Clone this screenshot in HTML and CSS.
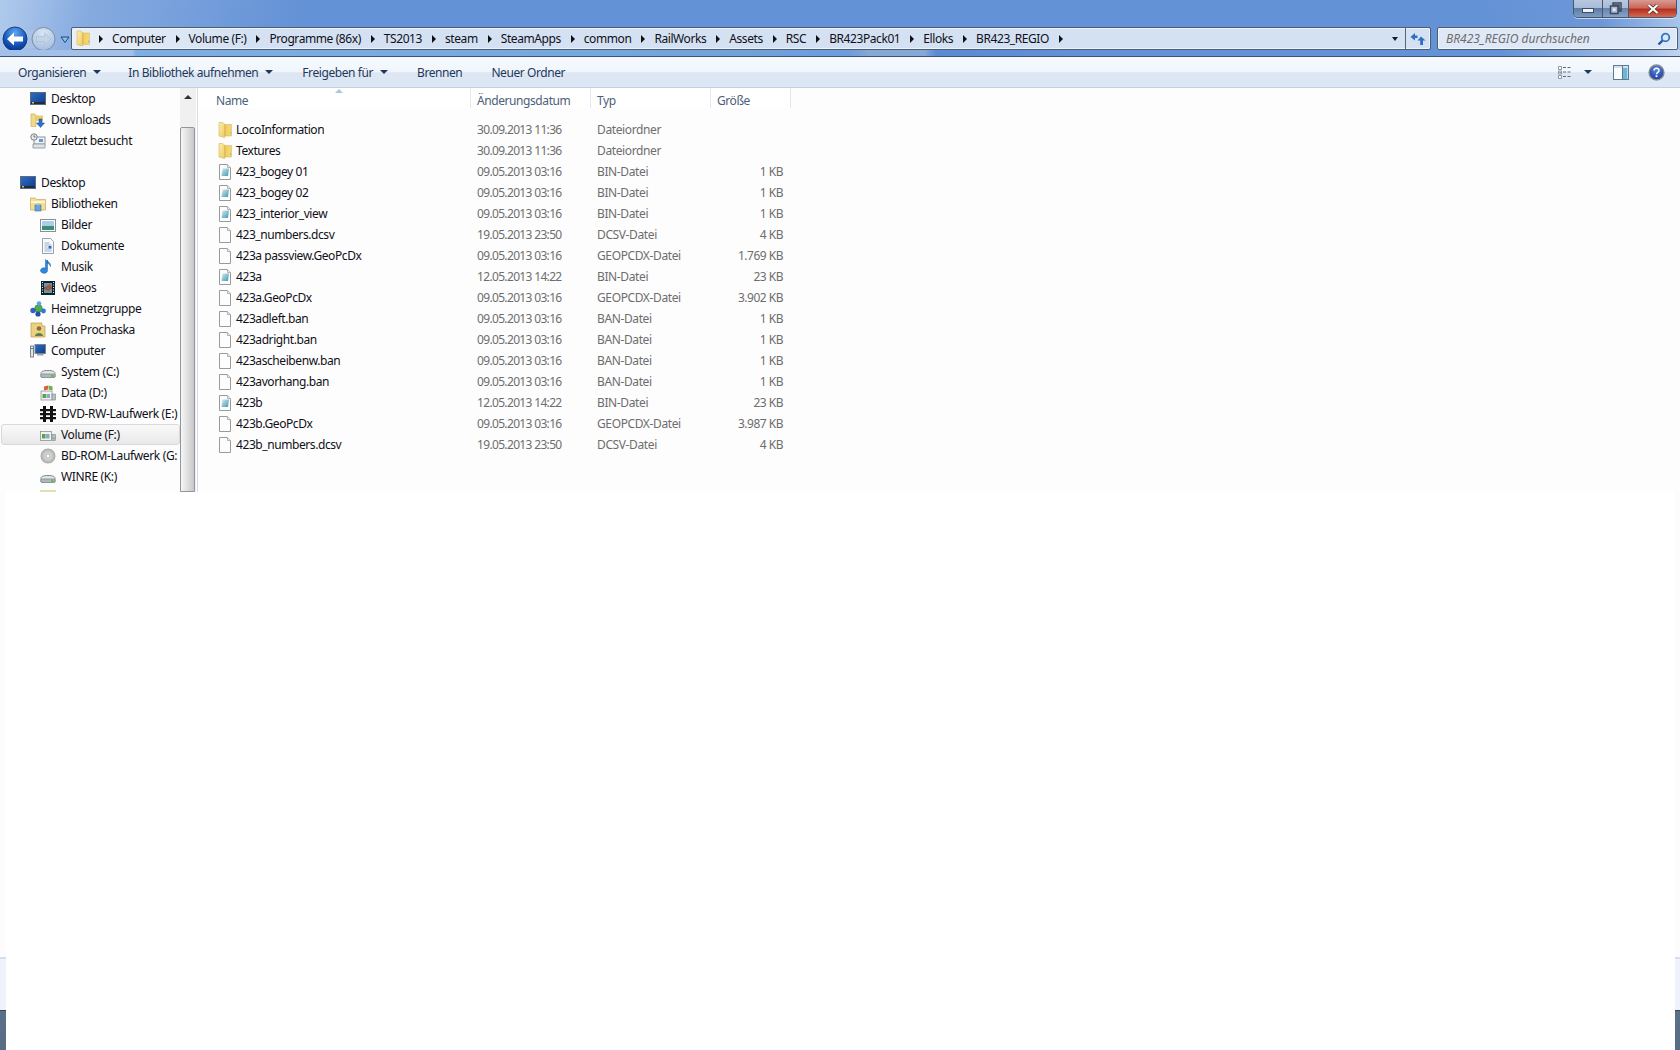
FILE: index.html
```html
<!DOCTYPE html>
<html lang="de">
<head>
<meta charset="utf-8">
<title>BR423_REGIO</title>
<link rel="stylesheet" href="styles.css">
</head>
<body>
<svg class="defs" width="0" height="0" aria-hidden="true">
  <defs>
    <linearGradient id="gLeaf" x1="0" y1="0" x2="1" y2="1"><stop offset="0" stop-color="#fbeeb0"/><stop offset="1" stop-color="#eecb5c"/></linearGradient>
    <linearGradient id="gFolder" x1="0" y1="0" x2="1" y2="0"><stop offset="0" stop-color="#b8913a"/><stop offset=".25" stop-color="#f2cf60"/><stop offset="1" stop-color="#f4d874"/></linearGradient>
    <linearGradient id="gBin" x1="0" y1="0" x2="1" y2="1"><stop offset="0" stop-color="#d6eaee"/><stop offset="1" stop-color="#3f97b2"/></linearGradient>
    <linearGradient id="gDesk" x1="0" y1="0" x2="1" y2="1"><stop offset="0" stop-color="#2f6fc7"/><stop offset="1" stop-color="#0d3a8a"/></linearGradient>
    <radialGradient id="gBack" cx=".5" cy=".25" r=".8"><stop offset="0" stop-color="#5fa8ee"/><stop offset=".55" stop-color="#1a5cc0"/><stop offset="1" stop-color="#062a80"/></radialGradient>
    <radialGradient id="gFwd" cx=".5" cy=".25" r=".8"><stop offset="0" stop-color="#d9e6f6"/><stop offset="1" stop-color="#a3bcdc"/></radialGradient>
    <radialGradient id="gHelp" cx=".5" cy=".3" r=".8"><stop offset="0" stop-color="#5a8ae0"/><stop offset="1" stop-color="#0f2f90"/></radialGradient>
    <radialGradient id="gDisc" cx=".5" cy=".5" r=".6"><stop offset="0" stop-color="#f0f0f0"/><stop offset=".7" stop-color="#b4b8b4"/><stop offset="1" stop-color="#8a908a"/></radialGradient>
    <symbol id="i-folder" viewBox="0 0 16 16"><path d="M7 2.500h7.500v11.500H7z" fill="url(#gFolder)" stroke="#d9bb62" stroke-width=".6"/><path d="M2 .5h3.500l2.200 1.500v13.500l-5.700-1.500z" fill="url(#gLeaf)" stroke="#d6b65c" stroke-width=".6"/><rect x="13" y="10" width="1" height="2" fill="#7cc4e4"/></symbol>
    <symbol id="i-file" viewBox="0 0 16 16"><path d="M2.500.5h8l3 3v12h-11z" fill="#fdfdfd" stroke="#9a9a9a"/><path d="M10.500.5v3h3" fill="#ececec" stroke="#b4b4b4"/></symbol>
    <symbol id="i-bin" viewBox="0 0 16 16"><path d="M2.500.5h8l3 3v12h-11z" fill="#fdfdfd" stroke="#9a9a9a"/><path d="M10.500.5v3h3" fill="#ececec" stroke="#b4b4b4"/><path d="M5.500 4.500h6.500l-1 7.500h-6.500z" fill="url(#gBin)"/></symbol>
    <symbol id="i-desktop" viewBox="0 0 16 16"><rect x=".5" y="1.500" width="15" height="12" fill="url(#gDesk)" stroke="#5a6c82"/><rect x="1" y="11" width="14" height="2" fill="#222c38"/><rect x="2" y="11" width="2" height="1.500" fill="#e6b840"/></symbol>
    <symbol id="i-download" viewBox="0 0 16 16"><path d="M1 2h4l1 1.500v11H1z" fill="#f1d98a" stroke="#c9a64c" stroke-width=".6"/><path d="M6 3.500h7V9H6z" fill="#edcc6c"/><path d="M9 7h3v4h2.500L10.500 15.500 6.500 11H9z" fill="#2a74cf" stroke="#174c98" stroke-width=".5"/></symbol>
    <symbol id="i-recent" viewBox="0 0 16 16"><rect x="4" y="4" width="11" height="7" fill="#f2f4f6" stroke="#8b949c"/><rect x="9" y="6" width="4" height="3" fill="#5c9bdc"/><path d="M3 11h12v4H3z" fill="#dfe2e4" stroke="#9aa2a8"/><circle cx="4" cy="4" r="3.200" fill="#e9eaea" stroke="#787f85"/><path d="M4 2.200V4h1.600" fill="none" stroke="#555" stroke-width=".8"/></symbol>
    <symbol id="i-lib" viewBox="0 0 16 16"><path d="M.5 3.500V2h5l1 1.500h9V14H.5z" fill="#f4dd95" stroke="#c9a64c" stroke-width=".7"/><path d="M1 5h14v2H1z" fill="#fff6d0"/><rect x="5" y="9" width="6" height="6" fill="#6aa3d8" stroke="#3b6ea8" stroke-width=".6"/><rect x="6.500" y="7.500" width="3" height="2" fill="#9cc3e6"/></symbol>
    <symbol id="i-pics" viewBox="0 0 16 16"><rect x=".5" y="2.500" width="15" height="12" fill="#fff" stroke="#8c8f92"/><rect x="2" y="4" width="12" height="5" fill="#a8cfe8"/><rect x="2" y="9" width="12" height="4" fill="#3c8c78"/></symbol>
    <symbol id="i-docs" viewBox="0 0 16 16"><path d="M2.500.5h8l3 3v12h-11z" fill="#f7f9fc" stroke="#9aa3ad"/><path d="M4.500 5h5M4.500 7h7M4.500 9h3M4.500 11h7M4.500 13h7" stroke="#9fb2c8"/><rect x="8.500" y="8" width="3" height="2.500" fill="#2e6bb4"/></symbol>
    <symbol id="i-music" viewBox="0 0 16 16"><path d="M7.500 1v10.500a3.500 2.800 0 1 1-2-2.500V0.500c2 2 5.500 3 5 7-.8-2.200-2-3-3-3.200z" fill="#2f86da" stroke="#1a5ea8" stroke-width=".5"/></symbol>
    <symbol id="i-video" viewBox="0 0 16 16"><rect x="1" y="1" width="14" height="14" fill="#11232c"/><path d="M4 3h8v4.500H4zM4 8.500h8V13H4z" fill="#6d93ae"/><path d="M5 7l5-3 2 3.500-3 3.500-4-1z" fill="#a05a3a"/><path d="M2 2.500h1M2 5h1M2 7.500h1M2 10h1M2 12.500h1M13 2.500h1M13 5h1M13 7.500h1M13 10h1M13 12.500h1" stroke="#dfe8ee" stroke-width="1.200"/></symbol>
    <symbol id="i-home" viewBox="0 0 16 16"><circle cx="8.500" cy="7.500" r="3.800" fill="#4bb04a" stroke="#2a7a35" stroke-width=".6"/><circle cx="3" cy="9.500" r="2.700" fill="#3560c0"/><circle cx="13.500" cy="10" r="2.400" fill="#2f78d4"/><circle cx="9" cy="2.500" r="2.300" fill="#5f9fe6"/><circle cx="8" cy="13" r="2.600" fill="#2450a8"/></symbol>
    <symbol id="i-user" viewBox="0 0 16 16"><path d="M1 1h11v3h3v11H1z" fill="#ecd27f" stroke="#bb9c4d" stroke-width=".7"/><circle cx="9" cy="6.500" r="2.300" fill="#8a6c4a"/><path d="M5 14c0-4 8-4 8 0z" fill="#5d7f4e"/></symbol>
    <symbol id="i-pc" viewBox="0 0 16 16"><rect x="5" y="1.500" width="10.500" height="9" fill="url(#gDesk)" stroke="#7b8690"/><path d="M7 11h6.500v1.500H7z" fill="#9aa2a8"/><rect x=".5" y="3" width="3" height="11" fill="#dfe3e6" stroke="#7b8690"/><rect x="1" y="5" width="2" height="1" fill="#3fa53a"/></symbol>
    <symbol id="i-hdd" viewBox="0 0 16 16"><path d="M1 9.500c0-2 2-3 7-3s7 1 7 3v3.500H1z" fill="#e1e5e7" stroke="#7d868c"/><rect x="1" y="10" width="14" height="3.500" rx="1" fill="#aeb7bc" stroke="#7d868c" stroke-width=".7"/><rect x="11" y="10.500" width="2.500" height="2.500" fill="#5fc04a"/></symbol>
    <symbol id="i-data" viewBox="0 0 16 16"><rect x="1" y="6" width="11" height="9" fill="#f2f2f0" stroke="#7d868c" stroke-width=".7"/><rect x="12" y="9" width="3.500" height="6" fill="#b8bfc2" stroke="#7d868c" stroke-width=".6"/><rect x="2.500" y="9" width="3.500" height="4" fill="#5aa04e"/><rect x="6.500" y="9" width="3.500" height="4" fill="#8aa8c8"/><path d="M4 1.500l4-1v4l-4 1z" fill="#d9623a"/><path d="M8.500.5l4 1v4l-4-1z" fill="#6fae4a"/></symbol>
    <symbol id="i-dvd" viewBox="0 0 16 16"><path d="M3 0h3v16H3zM10 0h3v16h-3z" fill="#111"/><path d="M0 3h16v2.200H0zM0 7h16v2.200H0zM0 11h16v2.200H0z" fill="#111"/></symbol>
    <symbol id="i-vol" viewBox="0 0 16 16"><rect x=".5" y="4.500" width="11" height="9" fill="#f2f2f0" stroke="#7d868c" stroke-width=".7"/><rect x="2" y="7" width="3.500" height="4.500" fill="#5aa04e"/><rect x="6" y="7" width="3.500" height="4.500" fill="#8aa8c8"/><rect x="12" y="7.500" width="3.500" height="6" fill="#b8bfc2" stroke="#7d868c" stroke-width=".6"/><rect x="13" y="10.500" width="1.500" height="1.500" fill="#5fc04a"/></symbol>
    <symbol id="i-disc" viewBox="0 0 16 16"><circle cx="8" cy="8" r="7.500" fill="url(#gDisc)"/><circle cx="8" cy="8" r="2" fill="#fff" stroke="#999" stroke-width=".6"/></symbol>
    <symbol id="i-next" viewBox="0 0 16 16"><rect x="0" y="0" width="16" height="16" fill="#cfe3bd"/><rect x="2" y="1" width="12" height="15" fill="#e9e3a8"/></symbol>
  </defs>
</svg>

<div class="window">
  <header class="titlebar">
    <div class="win-controls">
      <span class="wc wc-min"><i class="wc-dash"></i></span>
      <span class="wc wc-max"><svg width="13" height="13" viewBox="0 0 13 13"><path d="M4 1h8v8h-2V3H4z" fill="none" stroke="#3c4a5c" stroke-width="1.500"/><rect x="1.500" y="4" width="7.500" height="7.500" fill="#a8bcd6" stroke="#3c4a5c" stroke-width="1.500"/><rect x="4" y="6.500" width="2.500" height="2.500" fill="#e8eef6"/></svg></span>
      <span class="wc wc-close"><svg width="12" height="10" viewBox="0 0 12 10"><path d="M1.500 1l9 8M10.500 1l-9 8" stroke="#4a2a28" stroke-width="3.400"/><path d="M1.500 1l9 8M10.500 1l-9 8" stroke="#fff" stroke-width="2.200"/></svg></span>
    </div>
    <div class="navrow">
      <div class="navbtns">
        <svg class="nav-orbs" width="62" height="30" viewBox="0 0 62 30">
          <rect x="8" y="6" width="44" height="18" rx="9" fill="#a9c4e6" opacity=".7"/>
          <circle cx="15" cy="15" r="12" fill="url(#gBack)" stroke="#1b3f80"/>
          <path d="M7 15l7-6.500v4h9v5h-9v4z" fill="#fff"/>
          <circle cx="43.500" cy="15" r="11.500" fill="url(#gFwd)" stroke="#7f8da3"/>
          <path d="M51 15l-6.500-6v3.500h-8v5h8V21z" fill="#c3d3e8" stroke="#aabbd2" stroke-width=".6"/>
        </svg>
        <svg class="nav-drop" width="10" height="8" viewBox="0 0 10 8"><path d="M1 1h8L5 6.500z" fill="#8fc0ee" stroke="#174a80"/></svg>
      </div>
      <div class="addr">
        <svg class="addr-folder"><use href="#i-folder"/></svg>
        <ul class="crumbs">
          <li>Computer</li><li>Volume (F:)</li><li>Programme (86x)</li><li>TS2013</li><li>steam</li><li>SteamApps</li><li>common</li><li>RailWorks</li><li>Assets</li><li>RSC</li><li>BR423Pack01</li><li>Elloks</li><li>BR423_REGIO</li>
        </ul>
        <span class="addr-arrow"></span>
        <span class="addr-refresh"><svg width="16" height="14" viewBox="0 0 16 14"><path d="M5 1L0.500 5 5 8.500V6h2.500V3.500H5z" fill="#2e70bf"/><path d="M11 4.500L15.500 8.500H13V13h-2.800V8.500H7.500z" fill="#2e70bf"/></svg></span>
      </div>
      <div class="search">
        <span class="search-text">BR423_REGIO durchsuchen</span>
        <svg width="14" height="14" viewBox="0 0 14 14"><circle cx="8.500" cy="5.500" r="3.800" fill="none" stroke="#2f78c4" stroke-width="1.800"/><path d="M5.500 8.500L1.500 12.500" stroke="#1d5ea8" stroke-width="2.400"/></svg>
      </div>
    </div>
    <div class="band"></div>
  </header>

  <nav class="toolbar">
    <div class="tb-left">
      <span class="tb-item tb-menu tb-first">Organisieren</span>
      <span class="tb-item tb-menu">In Bibliothek aufnehmen</span>
      <span class="tb-item tb-menu">Freigeben für</span>
      <span class="tb-item">Brennen</span>
      <span class="tb-item">Neuer Ordner</span>
    </div>
    <div class="tb-right">
      <svg class="tb-views" width="15" height="13" viewBox="0 0 15 13"><path d="M.500.500h3v3h-3zM.500 5h3v3h-3zM.500 9.500h3v3h-3z" fill="#fff" stroke="#8b97a8"/><rect x="1.500" y="5.900" width="1.200" height="1.200" fill="#d8402e"/><path d="M5 1.500h3M9.500 1.500h3M5 6h3M9.500 6h3M5 10.500h3M9.500 10.500h3" stroke="#5e6c80"/></svg>
      <span class="tb-caret"></span>
      <svg class="tb-pane" width="16" height="15" viewBox="0 0 16 15"><rect x=".500" y=".500" width="15" height="14" fill="#fdfeff" stroke="#5f7a94"/><rect x="1" y="1" width="14" height="2" fill="#d5e2ee"/><rect x="10" y="3" width="4.500" height="11" fill="#6db8d4"/><path d="M9.500 1v13" stroke="#5f7a94"/></svg>
      <svg class="tb-help" width="17" height="17" viewBox="0 0 17 17"><circle cx="8.500" cy="8.500" r="7.500" fill="url(#gHelp)" stroke="#8c8f96" stroke-width="1.300"/><path d="M6 6.500c0-3.200 5.200-3 5 0 0 2-2.500 1.800-2.500 3.800" fill="none" stroke="#fff" stroke-width="1.500"/><rect x="7.600" y="11.300" width="1.800" height="1.800" fill="#fff"/></svg>
    </div>
  </nav>

  <div class="body">
    <aside class="tree">
      <ul class="tree-list">
        <li class="l1"><svg class="ic"><use href="#i-desktop"/></svg>Desktop</li>
        <li class="l1"><svg class="ic"><use href="#i-download"/></svg>Downloads</li>
        <li class="l1"><svg class="ic"><use href="#i-recent"/></svg>Zuletzt besucht</li>
        <li class="gap"></li>
        <li class="l0"><svg class="ic"><use href="#i-desktop"/></svg>Desktop</li>
        <li class="l1"><svg class="ic"><use href="#i-lib"/></svg>Bibliotheken</li>
        <li class="l2"><svg class="ic"><use href="#i-pics"/></svg>Bilder</li>
        <li class="l2"><svg class="ic"><use href="#i-docs"/></svg>Dokumente</li>
        <li class="l2"><svg class="ic"><use href="#i-music"/></svg>Musik</li>
        <li class="l2"><svg class="ic"><use href="#i-video"/></svg>Videos</li>
        <li class="l1"><svg class="ic"><use href="#i-home"/></svg>Heimnetzgruppe</li>
        <li class="l1"><svg class="ic"><use href="#i-user"/></svg>Léon Prochaska</li>
        <li class="l1"><svg class="ic"><use href="#i-pc"/></svg>Computer</li>
        <li class="l2"><svg class="ic"><use href="#i-hdd"/></svg>System (C:)</li>
        <li class="l2"><svg class="ic"><use href="#i-data"/></svg>Data (D:)</li>
        <li class="l2"><svg class="ic"><use href="#i-dvd"/></svg>DVD-RW-Laufwerk (E:)</li>
        <li class="l2 selected"><svg class="ic"><use href="#i-vol"/></svg>Volume (F:)</li>
        <li class="l2"><svg class="ic"><use href="#i-disc"/></svg>BD-ROM-Laufwerk (G:</li>
        <li class="l2"><svg class="ic"><use href="#i-hdd"/></svg>WINRE (K:)</li>
        <li class="l2"><svg class="ic"><use href="#i-next"/></svg></li>
      </ul>
      <div class="vscroll">
        <span class="vs-btn"></span>
        <span class="vs-thumb"></span>
      </div>
    </aside>
    <main class="files">
      <div class="cols">
        <span class="col col-name">Name</span>
        <span class="col col-date">Änderungsdatum</span>
        <span class="col col-type">Typ</span>
        <span class="col col-size">Größe</span>
      </div>
      <div class="rows">
        <div class="row"><span class="c-name"><svg class="ic"><use href="#i-folder"/></svg>LocoInformation</span><span class="c-date">30.09.2013 11:36</span><span class="c-type">Dateiordner</span><span class="c-size"></span></div>
        <div class="row"><span class="c-name"><svg class="ic"><use href="#i-folder"/></svg>Textures</span><span class="c-date">30.09.2013 11:36</span><span class="c-type">Dateiordner</span><span class="c-size"></span></div>
        <div class="row"><span class="c-name"><svg class="ic"><use href="#i-bin"/></svg>423_bogey 01</span><span class="c-date">09.05.2013 03:16</span><span class="c-type">BIN-Datei</span><span class="c-size">1 KB</span></div>
        <div class="row"><span class="c-name"><svg class="ic"><use href="#i-bin"/></svg>423_bogey 02</span><span class="c-date">09.05.2013 03:16</span><span class="c-type">BIN-Datei</span><span class="c-size">1 KB</span></div>
        <div class="row"><span class="c-name"><svg class="ic"><use href="#i-bin"/></svg>423_interior_view</span><span class="c-date">09.05.2013 03:16</span><span class="c-type">BIN-Datei</span><span class="c-size">1 KB</span></div>
        <div class="row"><span class="c-name"><svg class="ic"><use href="#i-file"/></svg>423_numbers.dcsv</span><span class="c-date">19.05.2013 23:50</span><span class="c-type">DCSV-Datei</span><span class="c-size">4 KB</span></div>
        <div class="row"><span class="c-name"><svg class="ic"><use href="#i-file"/></svg>423a passview.GeoPcDx</span><span class="c-date">09.05.2013 03:16</span><span class="c-type">GEOPCDX-Datei</span><span class="c-size">1.769 KB</span></div>
        <div class="row"><span class="c-name"><svg class="ic"><use href="#i-bin"/></svg>423a</span><span class="c-date">12.05.2013 14:22</span><span class="c-type">BIN-Datei</span><span class="c-size">23 KB</span></div>
        <div class="row"><span class="c-name"><svg class="ic"><use href="#i-file"/></svg>423a.GeoPcDx</span><span class="c-date">09.05.2013 03:16</span><span class="c-type">GEOPCDX-Datei</span><span class="c-size">3.902 KB</span></div>
        <div class="row"><span class="c-name"><svg class="ic"><use href="#i-file"/></svg>423adleft.ban</span><span class="c-date">09.05.2013 03:16</span><span class="c-type">BAN-Datei</span><span class="c-size">1 KB</span></div>
        <div class="row"><span class="c-name"><svg class="ic"><use href="#i-file"/></svg>423adright.ban</span><span class="c-date">09.05.2013 03:16</span><span class="c-type">BAN-Datei</span><span class="c-size">1 KB</span></div>
        <div class="row"><span class="c-name"><svg class="ic"><use href="#i-file"/></svg>423ascheibenw.ban</span><span class="c-date">09.05.2013 03:16</span><span class="c-type">BAN-Datei</span><span class="c-size">1 KB</span></div>
        <div class="row"><span class="c-name"><svg class="ic"><use href="#i-file"/></svg>423avorhang.ban</span><span class="c-date">09.05.2013 03:16</span><span class="c-type">BAN-Datei</span><span class="c-size">1 KB</span></div>
        <div class="row"><span class="c-name"><svg class="ic"><use href="#i-bin"/></svg>423b</span><span class="c-date">12.05.2013 14:22</span><span class="c-type">BIN-Datei</span><span class="c-size">23 KB</span></div>
        <div class="row"><span class="c-name"><svg class="ic"><use href="#i-file"/></svg>423b.GeoPcDx</span><span class="c-date">09.05.2013 03:16</span><span class="c-type">GEOPCDX-Datei</span><span class="c-size">3.987 KB</span></div>
        <div class="row"><span class="c-name"><svg class="ic"><use href="#i-file"/></svg>423b_numbers.dcsv</span><span class="c-date">19.05.2013 23:50</span><span class="c-type">DCSV-Datei</span><span class="c-size">4 KB</span></div>
      </div>
    </main>
  </div>
</div>

<div class="below">
  <div class="edge edge-l"><i class="e-pale"></i><i class="e-line"></i><i class="e-light"></i><i class="e-dark"></i></div>
  <div class="blank"></div>
  <div class="edge edge-r"><i class="e-pale"></i><i class="e-line"></i><i class="e-light"></i><i class="e-dark"></i></div>
</div>
</body>
</html>
```

FILE: styles.css
```css
* { box-sizing: border-box; }
html, body { margin: 0; padding: 0; height: 100%; }
body {
  width: 1680px;
  height: 1050px;
  overflow: hidden;
  display: flex;
  flex-direction: column;
  background: #fff;
  font-family: "Noto Sans", "Open Sans", sans-serif;
  font-size: 12px;
  letter-spacing: -.42px;
  color: #101018;
}
.defs { position: absolute; }
ul { list-style: none; margin: 0; padding: 0; }

.window { height: 492px; display: flex; flex-direction: column; flex: none; }

/* Title bar and navigation */
.titlebar {
  position: relative;
  height: 56px;
  flex: none;
  padding-top: 27px;
  display: flex;
  flex-direction: column;
  background:
    linear-gradient(100deg, rgba(190,212,240,.85) 0, rgba(160,190,232,.55) 90px, rgba(110,150,215,0) 300px),
    linear-gradient(260deg, rgba(190,212,240,.8) 0, rgba(120,160,222,.4) 80px, rgba(110,150,215,0) 200px),
    #6492d6;
}
.win-controls {
  position: absolute;
  top: 0;
  right: 3px;
  height: 18px;
  display: flex;
  border: 1px solid #46566c;
  border-top: 0;
  border-radius: 0 0 5px 5px;
  overflow: hidden;
  box-shadow: 0 1px 0 rgba(255,255,255,.6);
}
.wc { display: flex; align-items: center; justify-content: center; height: 100%; }
.wc-min { width: 29px; background: linear-gradient(#b7c8df 0, #a8bcd7 45%, #5f7ca6 50%, #7d9ac2 100%); border-right: 1px solid #46566c; }
.wc-max { width: 26px; background: linear-gradient(#b7c8df 0, #a8bcd7 45%, #6884ac 50%, #86a2c8 100%); border-right: 1px solid #46566c; }
.wc-close { width: 47px; background: linear-gradient(#d99a92 0, #c96a5c 45%, #b8301f 55%, #d06a55 100%); }
.wc-dash { display: block; width: 12px; height: 5px; background: #eef3f9; border: 1px solid #3e4e62; margin-top: 4px; }

.navrow { display: flex; align-items: center; height: 23px; flex: none; padding-right: 2px; }
.navbtns { width: 71px; flex: none; display: flex; align-items: center; }
.nav-orbs { flex: none; }
.nav-drop { flex: none; margin-top: 2px; margin-left: -2px; }
.addr {
  width: 1360px;
  height: 23px;
  flex: none;
  display: flex;
  align-items: center;
  border: 1px solid #4e5e72;
  box-shadow: inset 0 0 0 1px #eef3fa;
  border-radius: 2px;
  background: linear-gradient(90deg, #e8eff8 0, #d4e1f2 180px);
}
.addr-folder { margin-left: 3px; flex: none; width: 16px; height: 17px; }
.crumbs { flex: 1; display: flex; padding-left: 8px; }
.crumbs li { display: flex; align-items: center; padding-right: 10px; }
.crumbs li::before {
  content: "";
  width: 0;
  height: 0;
  margin-right: 9px;
  border-left: 4px solid #111;
  border-top: 4px solid transparent;
  border-bottom: 4px solid transparent;
}
.crumbs li:last-child::after {
  content: "";
  width: 0;
  height: 0;
  margin-left: 10px;
  border-left: 4px solid #111;
  border-top: 4px solid transparent;
  border-bottom: 4px solid transparent;
}
.addr-arrow {
  width: 0;
  height: 0;
  margin-right: 7px;
  border-top: 4px solid #0f1a40;
  border-left: 3.500px solid transparent;
  border-right: 3.500px solid transparent;
}
.addr-refresh {
  width: 25px;
  height: 100%;
  display: flex;
  align-items: center;
  justify-content: center;
  border-left: 1px solid #55667c;
}
.search {
  margin-left: 6px;
  width: 241px;
  height: 23px;
  flex: none;
  display: flex;
  align-items: center;
  justify-content: space-between;
  padding: 0 6px 0 8px;
  border: 1px solid #4e5e72;
  box-shadow: inset 0 0 0 1px #f0f4fb;
  border-radius: 2px;
  background: #dfe8f6;
}
.search-text { font-style: italic; color: #6d6d6d; letter-spacing: 0; }
.band {
  flex: 1;
  background: linear-gradient(90deg, #a3c1e8 0, #a3c1e8 132px, #7dafe4 136px, #74a8e0 600px, #6c9ddb 850px, #86a8d6 870px, #84a8d8 925px, #5a8bd2 936px, #6492d6 1100px, #6492d6 1500px, #a0bde6 1640px, #c0d4f0 1680px);
}

/* Command bar */
.toolbar {
  height: 32px;
  flex: none;
  display: flex;
  justify-content: space-between;
  align-items: center;
  color: #1e395b;
  border-top: 1px solid #3c5270;
  border-bottom: 1px solid #c3d0e0;
  background: linear-gradient(#f6fafe 0, #f1f6fc 50%, #dde7f4 52%, #dce6f4 100%);
}
.tb-left { display: flex; align-items: center; padding-left: 18px; }
.tb-item { margin-right: 29px; white-space: nowrap; }
.tb-first { margin-right: 27px; }
.tb-menu { display: flex; align-items: center; }
.tb-menu::after {
  content: "";
  margin-left: 7px;
  width: 0;
  height: 0;
  border-top: 4px solid #1e395b;
  border-left: 4px solid transparent;
  border-right: 4px solid transparent;
}
.tb-right { display: flex; align-items: center; padding-right: 15px; }
.tb-views { margin-right: 1px; }
.tb-caret {
  margin-left: 10px;
  width: 0;
  height: 0;
  border-top: 4px solid #1e395b;
  border-left: 4px solid transparent;
  border-right: 4px solid transparent;
}
.tb-pane { margin-left: 21px; }
.tb-help { margin-left: 19px; }

/* Body */
.body { flex: 1; display: flex; min-height: 0; background: #fdfdfd; overflow: hidden; }
.ic { width: 16px; height: 16px; flex: none; margin-right: 5px; }

.tree {
  width: 198px;
  flex: none;
  display: flex;
  overflow: hidden;
  letter-spacing: -.35px;
  border-right: 1px solid #d9dde3;
}
.tree-list { width: 180px; flex: none; overflow: hidden; padding-left: 1px; }
.tree-list li { height: 21px; display: flex; align-items: center; white-space: nowrap; border: 1px solid transparent; }
.tree-list .l0 { padding-left: 18px; }
.tree-list .l1 { padding-left: 28px; }
.tree-list .l2 { padding-left: 38px; }
.tree-list .selected {
  border-color: #d9d9d9;
  border-radius: 3px;
  background: linear-gradient(#fafafa, #e8e8e8);
}
.vscroll { width: 16px; flex: none; background: #f0f0f0; position: relative; }
.vs-btn {
  display: block;
  margin: 7px auto 0;
  width: 0;
  height: 0;
  border-bottom: 4px solid #333;
  border-left: 4px solid transparent;
  border-right: 4px solid transparent;
}
.vs-thumb {
  display: block;
  position: absolute;
  left: 0;
  right: 1px;
  top: 39px;
  bottom: 0;
  border: 1px solid #8f969e;
  border-radius: 2px 2px 0 0;
  background: linear-gradient(90deg, #f6f6f6, #c8c8c8);
}

.files { flex: 1; min-width: 0; }
.cols { height: 20px; width: 593px; display: flex; align-items: center; color: #4c607a; background: #fff; }
.col { height: 100%; display: flex; align-items: center; padding: 4px 0 0 6px; border-right: 1px solid #dfe9f5; }
.col-name { width: 273px; padding-left: 18px; position: relative; }
.col-name::after {
  content: "";
  position: absolute;
  left: 137px;
  top: 1px;
  width: 0;
  height: 0;
  border-bottom: 4px solid #a9c6e2;
  border-left: 4px solid transparent;
  border-right: 4px solid transparent;
}
.col-date { width: 120px; }
.col-type { width: 120px; }
.col-size { width: 80px; }
.rows { padding-top: 11px; }
.row { height: 21px; display: flex; align-items: center; white-space: nowrap; color: #6d6d6d; }
.c-name { width: 279px; padding-left: 19px; color: #101018; display: flex; align-items: center; }
.c-name .ic { margin-right: 3px; }
.c-date { width: 120px; letter-spacing: -.66px; }
.c-type { width: 110px; letter-spacing: -.38px; }
.c-size { width: 76px; text-align: right; letter-spacing: -.5px; }

/* Area below the window */
.below { flex: 1; display: flex; min-height: 0; }
.blank { flex: 1; background: #fff; }
.edge { display: flex; flex-direction: column; flex: none; }
.edge-l { width: 6px; }
.edge-r { width: 5px; }
.edge i { display: block; flex: none; }
.e-pale { height: 465px; background: #fcfcfc; }
.e-line { height: 2px; background: #d4dfee; }
.e-light { height: 51px; background: #eef2fb; }
.e-dark { height: 40px; border-top: 1px solid #3a4656; background: linear-gradient(#5a7088, #586c84); }
```
